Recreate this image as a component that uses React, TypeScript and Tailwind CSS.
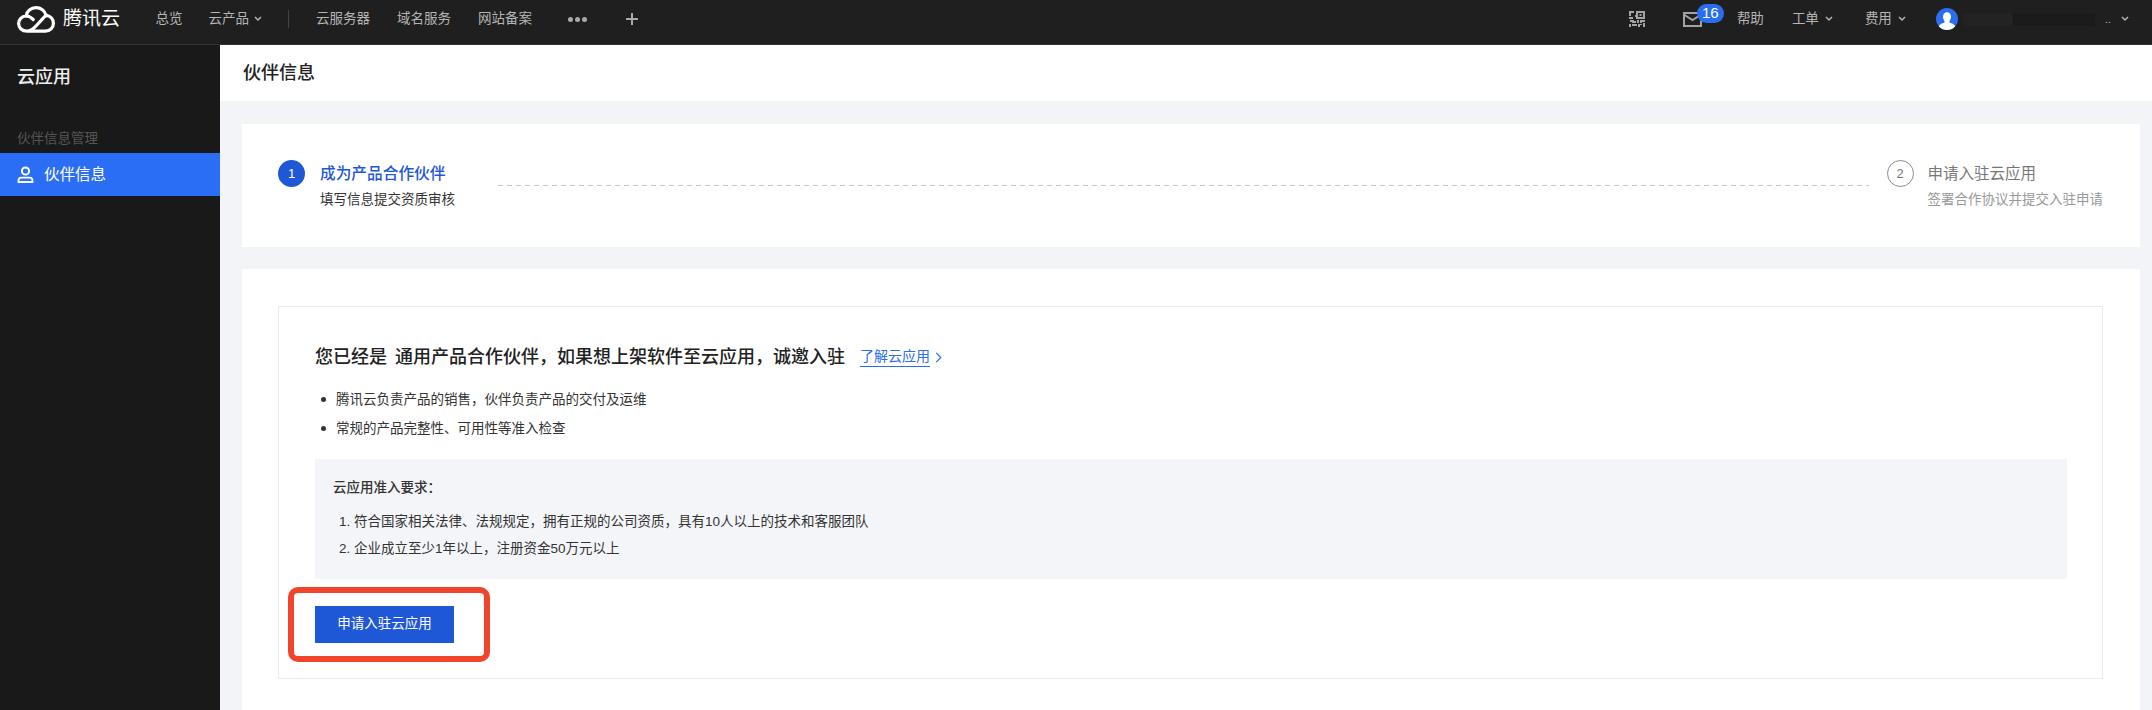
import React from "react";

const font = { fontFamily: '"Liberation Sans", "Noto Sans CJK SC", sans-serif' };

function Chevron({ className = "" }: { className?: string }) {
  return (
    <svg viewBox="0 0 8 6" className={`h-[6px] w-[8px] ${className}`} fill="none" stroke="currentColor" strokeWidth="1.5">
      <path d="M1 1l3 3 3-3" />
    </svg>
  );
}

function Logo() {
  return (
    <svg viewBox="0 0 38 27" className="h-[27px] w-[38px]" fill="none" stroke="#fff" strokeWidth="3.2" strokeLinecap="round">
      <path d="M10 25.2H28.5C33 25.2 36.4 21.8 36.4 17.4C36.4 13 33.3 9.8 29 9.4C27.8 4.8 23.8 1.7 19 1.7C14 1.7 9.8 5.2 9 10C4.8 10.2 1.6 13.5 1.6 17.6C1.6 21.8 5 25.2 10 25.2C14 25.2 16 23 19 20L23.5 15.2C25.5 13 27 10 30 9.4" />
      <path d="M9 10C12 9.8 14.2 11.5 16.2 13.5" />
    </svg>
  );
}

function QrIcon() {
  return (
    <svg viewBox="0 0 16 16" className="h-[16px] w-[16px]" fill="#a3a3a3">
      <path d="M0 0h5v2H2v3H0zM7 0h9v8H7V6H6V4h1zM9 2v4h5V2zM10.5 3h2v2h-2zM0 6h4v2H0zM1 9h4v1h2v2H3v-1H1zM8 9h2v3H8zM11 9h5v2h-3v1h-2zM0 13h2v3H0zM3 13h5v2H3zM9 13h4v1h-2v2H9zM14 12h2v4h-2z" fillRule="evenodd" />
    </svg>
  );
}

function MailIcon() {
  return (
    <svg viewBox="0 0 19 15" className="h-[15px] w-[19px]" fill="none" stroke="#a3a3a3" strokeWidth="2">
      <path d="M1 1h17v13H1z" />
      <path d="M1.5 3l8 5 8-5" />
    </svg>
  );
}

function AvatarIcon() {
  return (
    <svg viewBox="0 0 22 22" className="h-[22px] w-[22px]">
      <circle cx="11" cy="11" r="11" fill="#2a6ef0" />
      <clipPath id="av">
        <circle cx="11" cy="11" r="11" />
      </clipPath>
      <g clipPath="url(#av)" fill="#fff">
        <ellipse cx="11" cy="9" rx="4" ry="4.8" />
        <path d="M8.8 12.5h4.4l.6 2.3c2.4.8 4.6 1.6 5.2 3.2V23H3v-5c.6-1.6 2.8-2.4 5.2-3.2z" />
      </g>
    </svg>
  );
}

function UserIcon() {
  return (
    <svg viewBox="0 0 17 17" className="h-[17px] w-[17px]" fill="none" stroke="#fff" strokeWidth="2">
      <circle cx="8.5" cy="5" r="3.6" />
      <path d="M1.5 16v-1.4c0-1.8 1.4-3 3-3h8c1.6 0 3 1.2 3 3V16z" strokeWidth="1.8" />
    </svg>
  );
}

function Step({
  n,
  title,
  sub,
  active,
}: {
  n: number;
  title: string;
  sub: string;
  active?: boolean;
}) {
  return (
    <div className="flex shrink-0 items-start">
      <div
        className={
          active
            ? "mt-[2px] flex h-[27px] w-[27px] items-center justify-center rounded-full bg-[#1f58d6] text-[13px] text-white"
            : "mt-[2px] flex h-[27px] w-[27px] items-center justify-center rounded-full border border-[#8a8a8a] text-[13px] text-[#777]"
        }
      >
        {n}
      </div>
      <div className={active ? "ml-[15px] pt-[3px]" : "ml-[14px] pt-[3px]"}>
        <div className={active ? "text-[15.7px] leading-[26px] font-medium text-[#1f58d6]" : "text-[15.5px] leading-[26px] text-[#777]"}>{title}</div>
        <div className={active ? "mt-[1px] text-[13.5px] leading-[24px] text-[#333]" : "mt-[1px] text-[13.5px] leading-[24px] text-[#999]"}>{sub}</div>
      </div>
    </div>
  );
}

export default function App() {
  return (
    <div style={font} className="flex h-[710px] w-[2152px] flex-col overflow-hidden bg-[#f2f4f8]">
      <header className="flex h-[45px] shrink-0 items-center border-b border-[#333] bg-[#1f1f1f] pb-[6px] text-[13.5px] text-[#b5b5b5]">
        <div className="ml-[17px] flex items-center">
          <Logo />
          <span className="ml-[8px] text-[19px] text-white">腾讯云</span>
        </div>
        <span className="ml-[35.5px]">总览</span>
        <span className="ml-[26px] flex items-center">
          云产品
          <Chevron className="ml-[5px]" />
        </span>
        <span className="ml-[26px] h-[18px] w-px bg-[#444]" />
        <span className="ml-[27px]">云服务器</span>
        <span className="ml-[27px]">域名服务</span>
        <span className="ml-[27px]">网站备案</span>
        <span className="ml-[36px] flex gap-[2px]">
          <i className="h-[5px] w-[5px] rounded-full bg-[#aaa]" />
          <i className="h-[5px] w-[5px] rounded-full bg-[#aaa]" />
          <i className="h-[5px] w-[5px] rounded-full bg-[#aaa]" />
        </span>
        <svg viewBox="0 0 12 12" className="ml-[39px] h-[12px] w-[12px]" stroke="#aaa" strokeWidth="2">
          <path d="M6 0v12M0 6h12" />
        </svg>

        <div className="ml-auto flex items-center">
          <QrIcon />
          <div className="relative ml-[38px] mr-[35px]">
            <MailIcon />
            <span className="absolute -top-[8px] left-[14px] flex h-[19px] w-[27px] items-center justify-center rounded-full bg-[#2a6ef0] text-[15px] text-white">
              16
            </span>
          </div>
          <span>帮助</span>
          <span className="ml-[28px] flex items-center">
            工单
            <Chevron className="ml-[6px]" />
          </span>
          <span className="ml-[32px] flex items-center">
            费用
            <Chevron className="ml-[6px]" />
          </span>
          <span className="ml-[30px]">
            <AvatarIcon />
          </span>
          <span className="ml-[5px] h-[13px] w-[50px] rounded-sm bg-[#232323]" />
          <span className="h-[13px] w-[82px] bg-[#1b1b1b]" />
          <span className="ml-[10px] text-[11px] leading-none">..</span>
          <Chevron className="ml-[10px] mr-[23px]" />
        </div>
      </header>

      <div className="flex min-h-0 flex-1">
        <aside className="w-[220px] shrink-0 bg-[#191919] text-white">
          <div className="flex h-[64px] items-center pt-[1px] pl-[17px] text-[18px] font-medium text-[#eee]">云应用</div>
          <div className="mt-[20px] pl-[17px] text-[13.5px] leading-[20px] text-[#555]">伙伴信息管理</div>
          <div className="mt-[4px] flex h-[43px] items-center bg-[#2a6ef6] pl-[17px]">
            <UserIcon />
            <span className="ml-[10px] text-[15.5px]">伙伴信息</span>
          </div>
        </aside>

        <main className="flex min-w-0 flex-1 flex-col text-[#222]">
          <div className="flex h-[56px] shrink-0 items-center bg-white pl-[23px] text-[18px] font-medium text-[#222]">伙伴信息</div>

          <section className="mt-[23px] mr-[12px] ml-[22px] flex h-[123px] shrink-0 items-start bg-white pt-[34px] pr-[37px] pl-[36px]">
            <Step n={1} title="成为产品合作伙伴" sub="填写信息提交资质审核" active />
            <div className="mt-[27px] mr-[18px] ml-[43px] h-px flex-1 bg-[repeating-linear-gradient(90deg,#c4c6cc_0,#c4c6cc_5px,transparent_5px,transparent_9px)]" />
            <Step n={2} title="申请入驻云应用" sub="签署合作协议并提交入驻申请" />
          </section>

          <section className="mt-[22px] mr-[12px] ml-[22px] flex-1 bg-white pt-[37px] pr-[37px] pl-[36px]">
            <div className="h-[373px] border border-[#e9e9ef] pt-[37px] pr-[35px] pl-[36px]">
              <div className="flex items-center">
                <span className="text-[18px] leading-[26px] font-medium whitespace-pre text-[#222] [word-spacing:3px]">{"您已经是 通用产品合作伙伴\uFF0C如果想上架软件至云应用\uFF0C诚邀入驻"}</span>
                <a className="ml-[15px] border-b border-[#2a6ef0] text-[14px] leading-[19px] text-[#2a6ef0]">了解云应用</a>
                <svg viewBox="0 0 7 12" className="ml-[5px] h-[11px] w-[7px]" fill="none" stroke="#2a6ef0" strokeWidth="1.3">
                  <path d="M1 1l5 5-5 5" />
                </svg>
              </div>

              <ul className="mt-[15px] text-[13.5px] leading-[29px] text-[#333]">
                <li className="flex items-center pl-[6px]">
                  <i className="mr-[10px] h-[5px] w-[5px] rounded-full bg-[#333]" />
                  {"腾讯云负责产品的销售\uFF0C伙伴负责产品的交付及运维"}
                </li>
                <li className="flex items-center pl-[6px]">
                  <i className="mr-[10px] h-[5px] w-[5px] rounded-full bg-[#333]" />
                  常规的产品完整性、可用性等准入检查
                </li>
              </ul>

              <div className="mt-[16px] h-[120px] bg-[#f4f5f9] pt-[17px] pl-[18px] text-[13.5px] text-[#333]">
                <div className="leading-[24px] font-medium">{"云应用准入要求\uFF1A"}</div>
                <ol className="mt-[8px] pl-[6px] leading-[27px]">
                  <li>{"1. 符合国家相关法律、法规规定\uFF0C拥有正规的公司资质\uFF0C具有10人以上的技术和客服团队"}</li>
                  <li>{"2. 企业成立至少1年以上\uFF0C注册资金50万元以上"}</li>
                </ol>
              </div>

              <div className="relative mt-[27px]">
                <button className="h-[37px] w-[139px] bg-[#1f58d6] text-[13.5px] text-white">申请入驻云应用</button>
                <div className="absolute -top-[19px] -left-[27px] h-[75px] w-[202px] rounded-[10px] border-[6px] border-[#f0452a]" />
              </div>
            </div>
          </section>
        </main>
      </div>
    </div>
  );
}
